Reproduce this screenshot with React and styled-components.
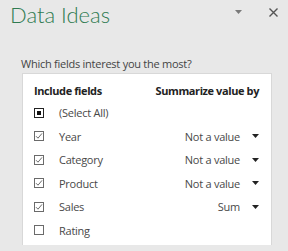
import React from "react";
import styled, { createGlobalStyle } from "styled-components";

const GlobalStyle = createGlobalStyle`
  html, body {
    margin: 0;
    padding: 0;
    background: #e8e8e8;
  }
  body {
    font-family: "Open Sans", "Noto Sans", sans-serif;
  }
`;

// Whole task pane
const Pane = styled.div`
  width: 288px;
  height: 251px;
  overflow: hidden;
  background: #e8e8e8;
  display: flex;
  flex-direction: column;
`;

const Header = styled.div`
  display: flex;
  align-items: flex-start;
  height: 34px;
  padding: 0 9px 0 10px;
`;

const Title = styled.h1`
  flex: 1;
  margin: 0;
  font-family: Lato, "Open Sans", sans-serif;
  font-size: 22px;
  font-weight: 300;
  color: #2f7b51;
  line-height: 30px;
`;

const HeaderButton = styled.div`
  display: flex;
  align-items: center;
  justify-content: center;
  width: ${(p) => p.w}px;
  height: 24px;
  margin-left: ${(p) => p.gap || 0}px;
`;

const Prompt = styled.p`
  margin: 22px 0 0 21px;
  font-size: 11px;
  letter-spacing: -0.25px;
  color: #444;
  line-height: 16px;
`;

const Card = styled.div`
  margin: 1px 16px 0 22px;
  height: 172px;
  background: #fff;
  border: 1px solid #d8d8d8;
  border-bottom: none;
  padding: 5px 12px 0 11px;
  box-sizing: border-box;
`;

const Row = styled.div`
  display: flex;
  align-items: center;
  height: ${(p) => (p.head ? 22 : 23.5)}px;
  font-size: 11px;
  letter-spacing: ${(p) => (p.head ? -0.4 : -0.25)}px;
  color: ${(p) => (p.head ? "#222" : "#484848")};
  font-weight: ${(p) => (p.head ? 700 : 400)};
`;

const Box = styled.span`
  width: 10px;
  height: 10px;
  box-sizing: border-box;
  border: 1px solid ${(p) => (p.dark ? "#222" : "#6a6a6a")};
  display: flex;
  align-items: center;
  justify-content: center;
  margin-right: 15px;
  flex-shrink: 0;
`;

const Inner = styled.span`
  width: 4px;
  height: 4px;
  background: #111;
`;

const Label = styled.span`
  flex: 1;
`;

const Value = styled.span`
  display: flex;
  align-items: center;
  gap: 12px;
`;

const Check = () => (
  <svg width="8" height="8" viewBox="0 0 8 8">
    <path d="M1 4.2 L3 6.2 L7 1.4" fill="none" stroke="#6a6a6a" strokeWidth="1" />
  </svg>
);

const Caret = ({ color = "#222" }) => (
  <svg width="7" height="4" viewBox="0 0 7 4">
    <path d="M0 0 H7 L3.5 4 Z" fill={color} />
  </svg>
);

const fields = [
  { name: "Year", value: "Not a value", checked: true },
  { name: "Category", value: "Not a value", checked: true },
  { name: "Product", value: "Not a value", checked: true },
  { name: "Sales", value: "Sum", checked: true },
  { name: "Rating", checked: false },
];

export default function App() {
  return (
    <Pane>
      <GlobalStyle />
      <Header>
        <Title>Data Ideas</Title>
        <HeaderButton w={10}>
          <Caret color="#7a7a7a" />
        </HeaderButton>
        <HeaderButton w={12} gap={24}>
          <svg width="9" height="9" viewBox="0 0 9 9">
            <path d="M0.5 0.5 L8.5 8.5 M8.5 0.5 L0.5 8.5" stroke="#555" strokeWidth="1.4" />
          </svg>
        </HeaderButton>
      </Header>
      <Prompt>Which fields interest you the most?</Prompt>
      <Card>
        <Row head>
          <Label>Include fields</Label>
          <span>Summarize value by</span>
        </Row>
        <Row>
          <Box dark>
            <Inner />
          </Box>
          <Label>(Select All)</Label>
        </Row>
        {fields.map((f) => (
          <Row key={f.name}>
            <Box>{f.checked && <Check />}</Box>
            <Label>{f.name}</Label>
            {f.value && (
              <Value>
                {f.value}
                <Caret />
              </Value>
            )}
          </Row>
        ))}
      </Card>
    </Pane>
  );
}
